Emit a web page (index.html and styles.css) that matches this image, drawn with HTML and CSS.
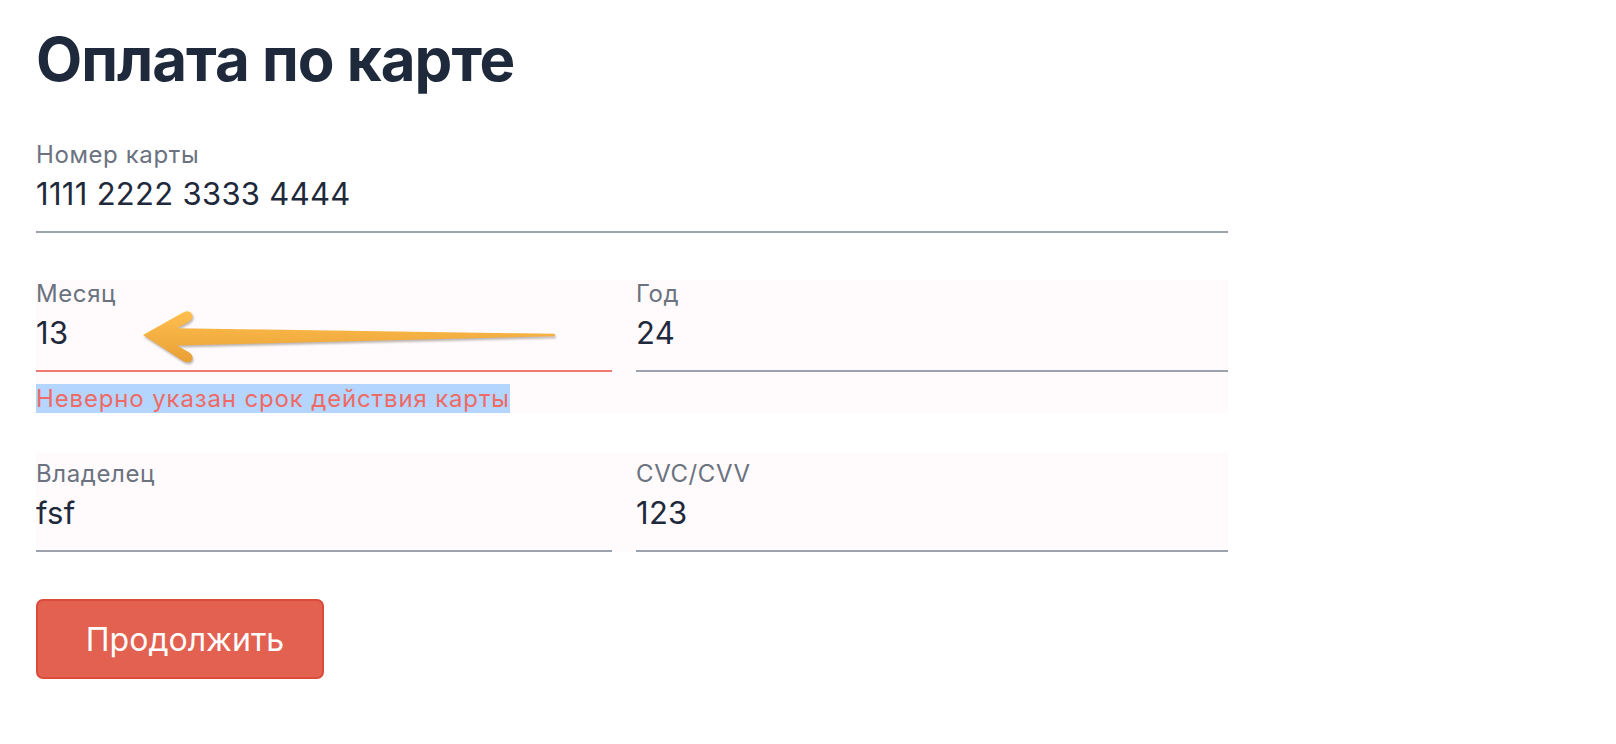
FILE: index.html
```html
<!DOCTYPE html>
<html lang="ru">
<head>
<meta charset="utf-8">
<title>Оплата по карте</title>
<link rel="stylesheet" href="styles.css">
</head>
<body>
<main class="page">
  <h1 class="title">Оплата по карте</h1>
  <form class="form">
    <div class="field field-wide">
      <label class="label">Номер карты</label>
      <input class="input" type="text" value="1111 2222 3333 4444">
    </div>
    <div class="row">
      <div class="col">
        <div class="field field-error">
          <label class="label">Месяц</label>
          <input class="input" type="text" value="13">
          <svg class="arrow" width="420" height="64" viewBox="0 0 420 64" aria-hidden="true">
            <defs>
              <linearGradient id="ag" x1="0" y1="0" x2="0" y2="1">
                <stop offset="0" stop-color="#fec04f"/>
                <stop offset="1" stop-color="#e99f34"/>
              </linearGradient>
            </defs>
            <path d="M3,30 L43,7.5 Q49.5,4.5 52,9 Q54,13.5 48.5,17 L37,23.2 L414,28.8 Q416.5,30 414,31.3 L37,40.5 L48.5,47 Q54,50.5 52,55 Q49.5,59 43,56 Z" fill="url(#ag)"/>
          </svg>
        </div>
        <p class="error-msg"><span class="error-text">Неверно указан срок действия карты</span></p>
      </div>
      <div class="col">
        <div class="field">
          <label class="label">Год</label>
          <input class="input" type="text" value="24">
        </div>
      </div>
    </div>
    <div class="row row-padded">
      <div class="col">
        <div class="field">
          <label class="label">Владелец</label>
          <input class="input" type="text" value="fsf">
        </div>
      </div>
      <div class="col">
        <div class="field">
          <label class="label">CVC/CVV</label>
          <input class="input" type="text" value="123">
        </div>
      </div>
    </div>
    <div class="actions">
      <button class="btn" type="button">Продолжить</button>
    </div>
  </form>
</main>
</body>
</html>
```
FILE: styles.css
```css
* { box-sizing: border-box; }
html, body { margin: 0; background: #ffffff; }
body { font-family: Inter, "Noto Sans", sans-serif; color: #1e293b; }

.page { padding: 22px 36px; width: 1264px; }

.title {
  margin: 0;
  font-size: 60px;
  line-height: 74px;
  font-weight: 700;
  color: #1e293b;
  letter-spacing: -1px;
}

.form {
  margin-top: 45px;
  display: flex;
  flex-direction: column;
  gap: 47px;
  width: 1192px;
}

.row {
  display: grid;
  grid-template-columns: 576px 592px;
  column-gap: 24px;
  background: #fffbfc;
}
.row-padded {
  padding-top: 7px;
  margin-top: -7px;
}

.col { display: flex; flex-direction: column; }

.field {
  position: relative;
  display: flex;
  flex-direction: column;
  border-bottom: 2px solid #9ca3af;
}
.field-error { border-bottom-color: #f07a72; }

.label {
  font-size: 24px;
  line-height: 28px;
  letter-spacing: 0.6px;
  color: #6b7280;
}

.input {
  font-family: Inter, "Noto Sans", sans-serif;
  font-size: 31px;
  line-height: 40px;
  letter-spacing: 0.3px;
  height: 62px;
  padding: 4px 0 18px;
  margin: 0;
  border: 0;
  outline: none;
  background: transparent;
  color: #1e293b;
  width: 100%;
}

.arrow {
  position: absolute;
  left: 104px;
  top: 25px;
  filter: drop-shadow(1px 2px 1px rgba(60, 50, 40, 0.35));
}

.error-msg {
  margin: 13px 0 0;
  font-size: 24px;
  line-height: 28px;
  letter-spacing: 0.85px;
}
.error-text {
  background: #b4d5fe;
  color: #ef6a64;
}

.actions { display: flex; }

.btn {
  width: 288px;
  height: 80px;
  font-family: Inter, "Noto Sans", sans-serif;
  font-size: 32px;
  color: #ffffff;
  background: #e26151;
  border: 2px solid #dc4a3b;
  border-radius: 7px;
  padding: 0 0 0 10px;
}
```
